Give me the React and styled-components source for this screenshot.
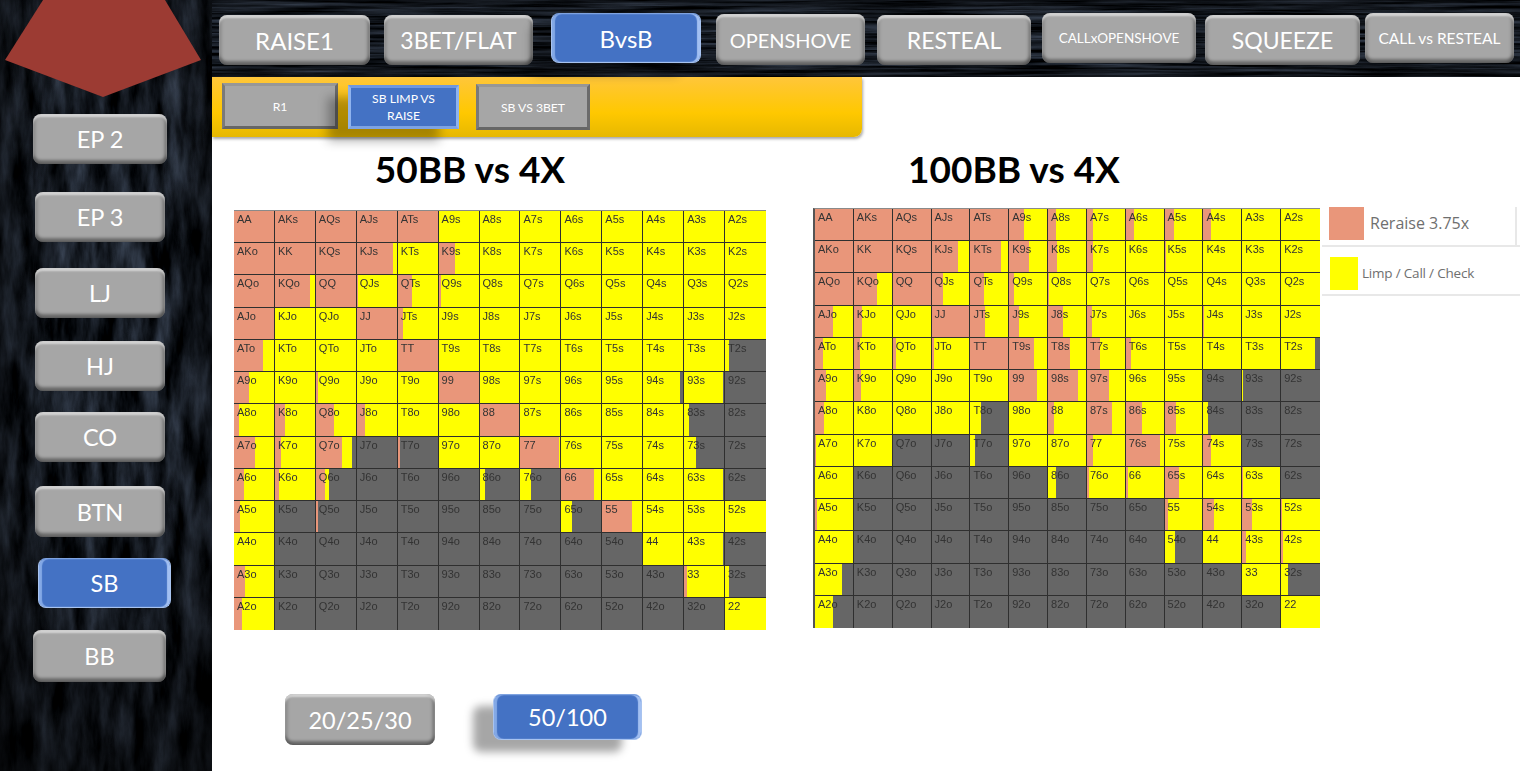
import React from "react";
import styled, { createGlobalStyle } from "styled-components";

const RANKS = "AKQJT98765432";
const SALMON = "#e9967a";
const YELLOW = "#ffff00";
const GRAY = "#666666";

// each cell: [percent salmon, percent yellow], the rest is gray
const S = [100, 0];
const Y = [0, 100];
const G = [0, 0];
const s = (n) => [n, 100 - n];
const y = (n) => [0, n];
const rep = (cell, n) => Array(n).fill(cell);

const chart50 = [
  [S, S, S, S, S, ...rep(Y, 8)],
  [S, S, S, s(90), Y, s(40), ...rep(Y, 7)],
  [S, s(87), S, s(3), s(35), s(5), ...rep(Y, 7)],
  [S, Y, Y, S, s(12), ...rep(Y, 8)],
  [s(72), Y, Y, Y, S, ...rep(Y, 7), y(10)],
  [s(38), Y, s(5), Y, Y, S, Y, Y, Y, Y, y(92), y(97), G],
  [s(12), s(25), s(45), s(20), Y, Y, S, Y, Y, Y, Y, y(12), G],
  [s(52), s(15), [65, 25], G, [5, 0], Y, Y, s(97), Y, Y, Y, y(30), G],
  [s(25), s(10), [22, 10], G, G, G, y(12), y(27), s(83), Y, Y, y(97), G],
  [s(15), G, [4, 0], G, G, G, G, G, y(27), s(75), Y, Y, Y],
  [Y, ...rep(G, 9), Y, y(97), G],
  [s(28), ...rep(G, 10), [8, 92], y(10)],
  [s(20), ...rep(G, 11), Y],
];

const chart100 = [
  [S, S, S, S, S, s(40), s(20), s(17), s(22), s(25), s(22), Y, Y],
  [S, S, S, s(70), s(82), s(53), s(25), s(17), Y, s(2), Y, Y, Y],
  [S, s(60), S, s(30), s(36), s(12), s(3), ...rep(Y, 6)],
  [s(47), s(22), Y, S, s(40), s(27), s(40), s(13), Y, Y, s(2), Y, Y],
  [s(20), s(15), s(8), s(6), S, s(67), s(58), s(35), s(14), Y, Y, Y, y(88)],
  [s(30), s(18), Y, Y, Y, s(75), s(79), s(57), Y, Y, G, y(2), G],
  [s(25), Y, Y, Y, y(28), Y, s(17), s(67), s(43), s(30), y(12), G, G],
  [s(2), Y, G, G, y(13), Y, Y, s(15), s(90), Y, s(20), G, G],
  [Y, G, G, G, G, G, y(20), s(5), s(5), s(38), Y, s(2), G],
  [s(6), ...rep(G, 8), s(8), s(30), s(26), s(3)],
  [Y, ...rep(G, 8), y(28), Y, s(10), s(5)],
  [y(72), ...rep(G, 10), Y, y(18)],
  [y(47), ...rep(G, 11), Y],
];

function handLabel(row, col) {
  if (row === col) return RANKS[row] + RANKS[col];
  if (col > row) return RANKS[row] + RANKS[col] + "s";
  return RANKS[col] + RANKS[row] + "o";
}

function cellBackground([salmon, yellow]) {
  const a = salmon;
  const b = salmon + yellow;
  return `linear-gradient(90deg, ${SALMON} ${a}%, ${YELLOW} ${a}% ${b}%, ${GRAY} ${b}%)`;
}

const sideButtons = [
  { label: "EP 2", x: 33, w: 134, h: 50, mt: 0 },
  { label: "EP 3", x: 35, w: 130, h: 50, mt: 28 },
  { label: "LJ", x: 35, w: 130, h: 50, mt: 26 },
  { label: "HJ", x: 35, w: 130, h: 50, mt: 23 },
  { label: "CO", x: 35, w: 130, h: 50, mt: 21 },
  { label: "BTN", x: 35, w: 130, h: 51, mt: 24 },
  { label: "SB", x: 38, w: 133, h: 50, mt: 21, active: true },
  { label: "BB", x: 33, w: 133, h: 52, mt: 22 },
];

const topButtons = [
  { label: "RAISE1", ml: 7, w: 151, h: 50, mt: 15, size: 24 },
  { label: "3BET/FLAT", ml: 14, w: 149, h: 50, mt: 15, size: 23 },
  { label: "BvsB", ml: 18, w: 150, h: 50, mt: 13, size: 24, active: true },
  { label: "OPENSHOVE", ml: 15, w: 149, h: 51, mt: 14, size: 20 },
  { label: "RESTEAL", ml: 12, w: 154, h: 50, mt: 15, size: 23 },
  { label: "CALLxOPENSHOVE", ml: 11, w: 154, h: 50, mt: 13, size: 13.5 },
  { label: "SQUEEZE", ml: 9, w: 155, h: 50, mt: 15, size: 23 },
  { label: "CALL vs RESTEAL", ml: 5, w: 149, h: 50, mt: 13, size: 15.5 },
];

const GlobalStyle = createGlobalStyle`
  html, body {
    margin: 0;
    padding: 0;
    background: #fff;
    overflow: hidden;
  }
  * {
    box-sizing: border-box;
  }
`;

const Page = styled.div`
  display: flex;
  width: 1520px;
  height: 771px;
  overflow: hidden;
  font-family: "Lato", "Liberation Sans", sans-serif;
`;

const Sidebar = styled.aside`
  position: relative;
  flex: 0 0 212px;
  display: flex;
  flex-direction: column;
  align-items: flex-start;
  background-color: #0c0f14;
`;

// dark slate texture behind the sidebar and the top bar
const TextureSvg = styled.svg`
  position: absolute;
  inset: 0;
  width: 100%;
  height: 100%;
`;

const Shade = styled.div`
  position: absolute;
  inset: 0;
  background: ${(p) => p.$bg};
`;

function Texture({ id, freq, seed, shade }) {
  return (
    <>
      <TextureSvg aria-hidden="true">
        <filter id={id} x="0" y="0" width="100%" height="100%" colorInterpolationFilters="sRGB">
          <feTurbulence type="fractalNoise" baseFrequency={freq} numOctaves="5" seed={seed} />
          <feColorMatrix values="0.42 0 0 0 -0.13  0.48 0 0 0 -0.14  0.58 0 0 0 -0.16  0 0 0 0 1" />
        </filter>
        <rect width="100%" height="100%" filter={`url(#${id})`} />
      </TextureSvg>
      <Shade $bg={shade} />
    </>
  );
}

const Logo = styled.svg`
  position: relative;
  display: block;
  flex: none;
`;

const bevel = `
  box-shadow:
    inset 0 3px 2px rgba(255, 255, 255, 0.55),
    inset 0 -4px 3px rgba(0, 0, 0, 0.35),
    inset 3px 0 3px rgba(0, 0, 0, 0.12),
    inset -3px 0 3px rgba(0, 0, 0, 0.22);
`;

const Pill = styled.div`
  position: relative;
  flex: none;
  display: flex;
  align-items: center;
  justify-content: center;
  width: ${(p) => p.$w}px;
  height: ${(p) => p.$h}px;
  border-radius: 8px;
  color: #fff;
  font-size: ${(p) => p.$size || 23.5}px;
  background: ${(p) => (p.$active ? "#4472c4" : "#a6a6a6")};
  ${(p) =>
    p.$active
      ? `
    border: 1px solid;
    border-color: #7fa3e0 #a8c3ef #a8c3ef #a8c3ef;
    box-shadow: inset 3px 0 1px #84a9e6, inset -3px 0 1px #a3c0f2;
  `
      : bevel}
`;

const SideButton = styled(Pill)`
  margin-left: ${(p) => p.$x}px;
  margin-top: ${(p) => p.$mt}px;
`;

const Main = styled.main`
  flex: 1;
  display: flex;
  flex-direction: column;
  min-width: 0;
`;

const TopBar = styled.nav`
  position: relative;
  z-index: 2;
  flex: 0 0 77px;
  display: flex;
  align-items: flex-start;
  background-color: #101317;
`;

const TopButton = styled(Pill)`
  margin-left: ${(p) => p.$ml}px;
  margin-top: ${(p) => p.$mt}px;
  white-space: nowrap;
  ${(p) => p.$active && "box-shadow: inset 3px 0 1px #84a9e6, inset -3px 0 1px #a3c0f2, -20px 12px 10px rgba(0, 0, 0, 0.3);"}
`;

const SubBar = styled.div`
  flex: 0 0 60px;
  width: 650px;
  display: flex;
  align-items: flex-start;
  border-radius: 0 0 8px 0;
  background: linear-gradient(180deg, #ffc63a 0%, #ffc800 60%, #e6b800 100%);
  box-shadow: 1px 2px 3px rgba(0, 0, 0, 0.35);
`;

const SubButton = styled.div`
  flex: none;
  display: flex;
  align-items: center;
  justify-content: center;
  text-align: center;
  width: ${(p) => p.$w}px;
  height: ${(p) => p.$h}px;
  margin-left: ${(p) => p.$ml}px;
  margin-top: ${(p) => p.$mt}px;
  font-size: 12.2px;
  line-height: 17px;
  color: #fff;
  background: ${(p) => (p.$active ? "#4472c4" : "#a6a6a6")};
  border: 3px solid;
  border-color: ${(p) =>
    p.$active
      ? "#6e97df #8fb3ee #7ea3e2 #8fb3ee"
      : "#979797 #6b6b6b #666 #7a7a7a"};
  ${(p) => p.$active && "box-shadow: -20px 12px 10px rgba(0, 0, 0, 0.3);"}
`;

const Content = styled.div`
  display: flex;
  align-items: flex-start;
`;

const ChartColumn = styled.section`
  flex: none;
  margin-left: ${(p) => p.$ml}px;
`;

const ChartTitle = styled.h2`
  margin: 0;
  height: ${(p) => p.$h}px;
  width: ${(p) => p.$w}px;
  padding-top: 10px;
  text-align: center;
  font-size: 37px;
  line-height: 44px;
  font-weight: 700;
  color: #000;
`;

const Grid = styled.div`
  display: grid;
  grid-template-columns: repeat(13, 1fr);
  grid-template-rows: repeat(13, 1fr);
  width: ${(p) => p.$w}px;
  height: 420px;
  border-top: 1px solid #8a8a8a;
  border-left: ${(p) => (p.$edge ? "2px solid #555" : "none")};
  filter: blur(0.3px);
`;

const Cell = styled.div`
  padding: 2px 0 0 3px;
  font-family: "Liberation Sans", Arial, sans-serif;
  font-size: 11px;
  line-height: 13px;
  color: #333;
  border-right: 1px solid #2f2f2f;
  border-bottom: 1px solid #2f2f2f;

  &:nth-child(13n) {
    border-right: none;
  }
  &:nth-last-child(-n + 13) {
    border-bottom: none;
  }
`;

const Legend = styled.aside`
  flex: 1;
  margin-top: 70px;
  margin-left: 2px;
  font-family: "Open Sans", "Liberation Sans", sans-serif;
  color: #6f6f6f;
`;

const LegendRow = styled.div`
  display: flex;
  align-items: center;
  height: ${(p) => p.$h}px;
  padding: ${(p) => p.$pt || 0}px 0 ${(p) => p.$pb || 0}px ${(p) => p.$pad}px;
  gap: ${(p) => p.$gap}px;
  font-size: ${(p) => p.$size}px;
  letter-spacing: ${(p) => p.$track || 0}px;
  border-bottom: 2px solid #e8e8e8;
`;

const Swatch = styled.span`
  flex: none;
  width: ${(p) => p.$w}px;
  height: ${(p) => p.$h}px;
  background: ${(p) => p.$color};
`;

const LegendDivider = styled.span`
  align-self: stretch;
  width: 2px;
  margin: 0 3px -6px auto;
  background: #e8e8e8;
`;

const BottomRow = styled.div`
  display: flex;
  align-items: flex-start;
  gap: 58px;
  margin-top: 64px;
  padding-left: 73px;
`;

const StackButton = styled(Pill)`
  ${(p) => p.$active && "box-shadow: inset 3px 0 1px #84a9e6, inset -3px 0 1px #a3c0f2, -20px 12px 8px rgba(0, 0, 0, 0.35);"}
`;

function RangeChart({ title, rows, width, titleWidth, titleHeight, ml, edge }) {
  return (
    <ChartColumn $ml={ml}>
      <ChartTitle $w={titleWidth} $h={titleHeight}>
        {title}
      </ChartTitle>
      <Grid $w={width} $edge={edge}>
        {rows.map((row, r) =>
          row.map((mix, c) => (
            <Cell key={`${r}-${c}`} style={{ background: cellBackground(mix) }}>
              {handLabel(r, c)}
            </Cell>
          ))
        )}
      </Grid>
    </ChartColumn>
  );
}

export default function App() {
  return (
    <Page>
      <GlobalStyle />
      <Sidebar>
        <Texture
          id="slate"
          freq="0.06 0.014"
          seed="7"
          shade="linear-gradient(180deg, rgba(0,0,0,.1) 0%, transparent 30%, transparent 60%, rgba(0,0,0,.45) 100%), linear-gradient(90deg, rgba(0,0,0,.35), transparent 30%, transparent 75%, rgba(0,0,0,.3))"
        />
        <Logo width="212" height="114" viewBox="0 0 212 114">
          <polygon points="43,0 165,0 201,60 103,97 5,60" fill="#9c3b33" />
        </Logo>
        {sideButtons.map((b) => (
          <SideButton
            key={b.label}
            $x={b.x}
            $w={b.w}
            $h={b.h}
            $mt={b.mt}
            $active={b.active}
          >
            {b.label}
          </SideButton>
        ))}
      </Sidebar>
      <Main>
        <TopBar>
          <Texture
            id="planks"
            freq="0.008 0.3"
            seed="3"
            shade="linear-gradient(180deg, rgba(0,0,0,.3), transparent 20px, transparent 62px, rgba(0,0,0,.35))"
          />
          {topButtons.map((b) => (
            <TopButton
              key={b.label}
              $ml={b.ml}
              $w={b.w}
              $h={b.h}
              $mt={b.mt}
              $size={b.size}
              $active={b.active}
            >
              {b.label}
            </TopButton>
          ))}
        </TopBar>
        <SubBar>
          <SubButton $ml={10} $mt={6} $w={116} $h={46}>
            R1
          </SubButton>
          <SubButton $ml={10} $mt={8} $w={111} $h={44} $active>
            SB LIMP VS
            <br />
            RAISE
          </SubButton>
          <SubButton $ml={17} $mt={7} $w={114} $h={46}>
            SB VS 3BET
          </SubButton>
        </SubBar>
        <Content>
          <RangeChart
            title="50BB vs 4X"
            rows={chart50}
            width={532}
            titleWidth={472}
            titleHeight={73}
            ml={22}
          />
          <RangeChart
            title="100BB vs 4X"
            rows={chart100}
            width={507}
            titleWidth={402}
            titleHeight={71}
            ml={47}
            edge
          />
          <Legend>
            <LegendRow $h={40} $pb={6} $pad={7} $gap={6} $size={16}>
              <Swatch $w={35} $h={33} $color={SALMON} />
              Reraise 3.75x
              <LegendDivider />
            </LegendRow>
            <LegendRow $h={49} $pt={5} $pad={8} $gap={4} $size={13.5} $track={-0.2}>
              <Swatch $w={28} $h={33} $color={YELLOW} />
              Limp / Call / Check
            </LegendRow>
          </Legend>
        </Content>
        <BottomRow>
          <StackButton $w={150} $h={51}>
            20/25/30
          </StackButton>
          <StackButton $w={149} $h={46} $active>
            50/100
          </StackButton>
        </BottomRow>
      </Main>
    </Page>
  );
}
